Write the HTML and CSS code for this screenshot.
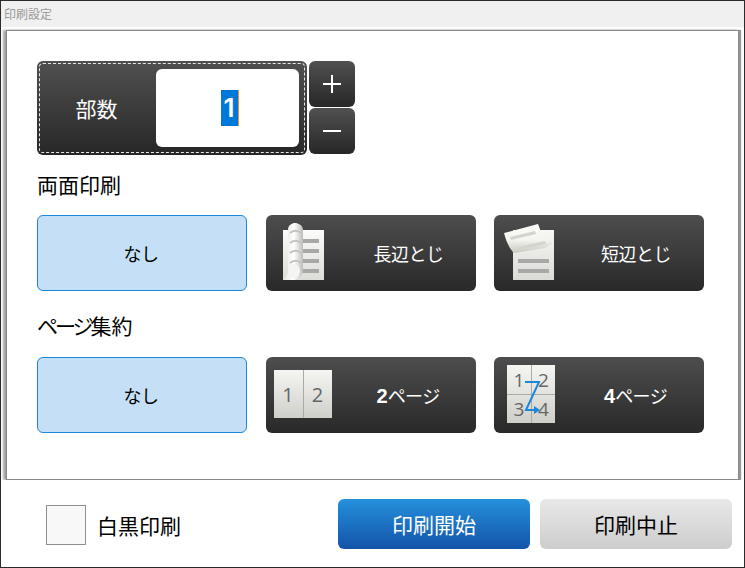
FILE: index.html
```html
<!DOCTYPE html>
<html lang="ja">
<head>
<meta charset="utf-8">
<title>印刷設定</title>
<link rel="stylesheet" href="styles.css">
</head>
<body>
<div class="window">
  <div class="titlebar">印刷設定</div>
  <main class="panel">
    <div class="copies-row">
      <div class="copies">
        <span class="copies-label">部数</span>
        <div class="copies-field"><span class="sel">1</span></div>
      </div>
      <div class="steppers">
        <button class="stepper">
          <svg width="18" height="18" viewBox="0 0 18 18"><path d="M9 0v18M0 9h18" stroke="#fff" stroke-width="2"/></svg>
        </button>
        <button class="stepper">
          <svg width="18" height="18" viewBox="0 0 18 18"><path d="M0 9h18" stroke="#fff" stroke-width="2"/></svg>
        </button>
      </div>
    </div>

    <h2 class="section">両面印刷</h2>
    <div class="options">
      <button class="opt selected">なし</button>
      <button class="opt dark">
        <span class="ico ico-long">
          <svg width="46" height="62" viewBox="0 0 46 62">
            <defs>
              <linearGradient id="pg" x1="0" y1="0" x2="0" y2="1"><stop offset="0" stop-color="#fbfbf9"/><stop offset="1" stop-color="#dcdcd8"/></linearGradient>
              <linearGradient id="rl" x1="0" y1="0" x2="1" y2="0"><stop offset="0" stop-color="#e4e4e0"/><stop offset=".55" stop-color="#fff"/><stop offset="1" stop-color="#bdbdb8"/></linearGradient>
            </defs>
            <rect x="2" y="9" width="41" height="50" fill="url(#pg)"/>
            <g fill="#a8a8a6"><rect x="21" y="18" width="17" height="4"/><rect x="21" y="28" width="17" height="4"/><rect x="21" y="38" width="17" height="4"/><rect x="21" y="48" width="17" height="4"/></g>
            <path d="M7 9c0-5 4-7 7-7s8 2 8 7v40c0 6-5 10-10 10H2c3-2 5-6 5-10z" fill="url(#rl)"/>
            <g stroke="#c4c4bf" stroke-width="2" fill="none"><path d="M9 12c3-3 8-3 11 0M9 22c3-3 8-3 11 0M9 32c3-3 8-3 11 0M9 42c3-3 8-3 11 0"/></g>
            <ellipse cx="13" cy="50" rx="6" ry="7" fill="#f4f4f2"/>
          </svg>
        </span>
        <span class="opt-text">長辺とじ</span>
      </button>
      <button class="opt dark">
        <span class="ico ico-short">
          <svg width="56" height="62" viewBox="0 0 56 62">
            <defs>
              <linearGradient id="pg2" x1="0" y1="0" x2="0" y2="1"><stop offset="0" stop-color="#f7f7f4"/><stop offset="1" stop-color="#dadad6"/></linearGradient>
              <linearGradient id="fl" x1="0" y1="0" x2="0" y2="1"><stop offset="0" stop-color="#fbfbf8"/><stop offset=".55" stop-color="#f4f4f0"/><stop offset="1" stop-color="#c9c9c0"/></linearGradient>
            </defs>
            <rect x="12" y="9" width="41" height="50" fill="url(#pg2)"/>
            <g fill="#a8a8a6"><rect x="17" y="38" width="31" height="4"/><rect x="17" y="48" width="31" height="4"/></g>
            <path d="M3 12L37 3l5 13 10 6-8 5-31 5C8 27 5 20 3 12z" fill="url(#fl)"/>
            <g fill="#d4d4cf"><path d="M9 16l25-6 1 3-25 6zM17 26l27-6 1 3-27 6z"/></g>
          </svg>
        </span>
        <span class="opt-text">短辺とじ</span>
      </button>
    </div>

    <h2 class="section"><span class="tight">ページ</span>集約</h2>
    <div class="options">
      <button class="opt selected">なし</button>
      <button class="opt dark">
        <span class="ico ico-two">
          <span class="sheet two"><span class="cell">1</span><span class="cell">2</span></span>
        </span>
        <span class="opt-text"><b class="num">2</b>ページ</span>
      </button>
      <button class="opt dark">
        <span class="ico ico-four">
          <span class="sheet four">
            <span class="cell">1</span><span class="cell">2</span><span class="cell">3</span><span class="cell">4</span>
            <svg class="z-arrow" width="48" height="58" viewBox="0 0 48 58"><path d="M18 17h14L19 45h10" fill="none" stroke="#1b87d8" stroke-width="2"/><path d="M27 41l6 4-6 4z" fill="#1b87d8"/></svg>
          </span>
        </span>
        <span class="opt-text"><b class="num">4</b>ページ</span>
      </button>
    </div>
  </main>
  <footer class="footer">
    <label class="mono">
      <span class="check"></span>
      <span>白黒印刷</span>
    </label>
    <button class="action start">印刷開始</button>
    <button class="action stop">印刷中止</button>
  </footer>
</div>
</body>
</html>
```

FILE: styles.css
```css
* { box-sizing: border-box; }
html, body { margin: 0; padding: 0; }
body {
  width: 745px;
  height: 568px;
  overflow: hidden;
  font-family: "Noto Sans CJK JP", "Noto Sans", sans-serif;
  background: #fff;
}
button { font-family: inherit; border: 0; padding: 0; margin: 0; }
.window {
  width: 745px;
  height: 568px;
  border: 1px solid #2b2b2b;
  display: flex;
  flex-direction: column;
  background: #fff;
}
.titlebar {
  height: 26px;
  flex: none;
  background: #f0f0f0;
  color: #9a9a9a;
  font-size: 12px;
  line-height: 25px;
  padding-left: 3px;
}
.panel {
  flex: none;
  width: 733px;
  height: 450px;
  margin: 3px 0 0 5px;
  background: #fff;
  border: 1px solid #8a8a8a;
  box-shadow: 0 2px 2px #8f8f8f, -3px 0 2px #aaa, 2px 0 1px #999;
  padding: 30px 30px 0 30px;
}
.copies-row { display: flex; gap: 2px; height: 94px; }
.copies {
  width: 270px;
  height: 94px;
  border-radius: 6px;
  background: linear-gradient(#505050, #272727);
  outline: 1px dashed #e6e6e6;
  outline-offset: -3px;
  display: flex;
  align-items: center;
  padding: 8px 7px 8px 0;
}
.copies-label { width: 119px; text-align: center; color: #fff; font-size: 21px; }
.copies-field {
  width: 143px;
  height: 78px;
  background: #fff;
  border-radius: 6px;
  display: flex;
  align-items: center;
  justify-content: center;
  font-family: "Inter", "Noto Sans", sans-serif;
  font-size: 26px;
}
.sel {
  display: block;
  background: #0078d7;
  color: #fff;
  width: 18px;
  height: 36px;
  line-height: 36px;
  text-align: center;
  border-right: 1px solid #f28c28;
  margin-right: -4px;
  font-weight: 600;
}
.steppers { display: flex; flex-direction: column; gap: 1px; }
.stepper {
  width: 46px;
  height: 46px;
  border-radius: 6px;
  background: linear-gradient(#505050, #272727);
  display: flex;
  align-items: center;
  justify-content: center;
}
.section {
  margin: 0;
  font-weight: 400;
  font-size: 21px;
  line-height: 26px;
  color: #000;
  height: 26px;
  margin-top: 16px;
}
.tight { letter-spacing: -3px; }
.options { display: flex; gap: 18.5px; height: 76px; }
.section + .options { margin-top: 18px; }
.options + .section { margin-top: 21px; }
.options + .section + .options { margin-top: 19px; }
.opt {
  width: 210px;
  height: 76px;
  border-radius: 6px;
  font-size: 18px;
  letter-spacing: -0.5px;
  display: flex;
  align-items: center;
  justify-content: center;
  position: relative;
}
.opt.selected { background: #c5e0f6; border: 1px solid #1b87d8; color: #000; padding-right: 2px; }
.opt.dark {
  background: linear-gradient(#4d4d4d, #292929);
  color: #fff;
  justify-content: flex-start;
}
.ico { height: 76px; flex: none; display: flex; align-items: flex-start; justify-content: flex-start; }
.ico-long { width: 108px; padding: 6px 0 0 15px; }
.ico-short { width: 107px; padding: 6px 0 0 7px; }
.ico-two { width: 111px; padding: 13px 0 0 8px; }
.ico-four { width: 110px; padding: 8px 0 0 13px; }
.opt-text { font-size: 18px; white-space: nowrap; }
.num { font-family: "Liberation Sans", sans-serif; font-weight: 700; font-size: 20px; letter-spacing: 0; }
.sheet {
  display: grid;
  background: linear-gradient(#f5f5f2, #cfcfca);
  color: #666;
  font-family: "Open Sans", "Noto Sans", sans-serif;
  letter-spacing: 0;
  position: relative;
}
.sheet.two { width: 58px; height: 48px; grid-template-columns: 1fr 1fr; font-size: 20px; }
.sheet.four { width: 48px; height: 58px; grid-template-columns: 1fr 1fr; grid-template-rows: 1fr 1fr; font-size: 19px; }
.cell { display: flex; align-items: center; justify-content: center; border-left: 1px solid #aaa; }
.cell:nth-child(odd) { border-left: 0; }
.four .cell:nth-child(n+3) { border-top: 1px solid #aaa; }
.z-arrow { position: absolute; left: 0; top: 0; }
.footer {
  flex: 1;
  display: flex;
  align-items: center;
  padding: 1px 12px 0 45px;
  background: #fff;
}
.mono { display: flex; align-items: center; gap: 11px; font-size: 21px; color: #000; margin-right: auto; margin-top: 2px; }
.check { width: 40px; height: 40px; border: 1px solid #8f8f8f; background: #f8f8f8; display: block; }
.action { width: 192px; height: 50px; border-radius: 6px; font-size: 21px; }
.start { background: linear-gradient(#2590dc, #1354a8); color: #fff; margin-right: 10px; }
.stop { background: linear-gradient(#e8e8e8, #cdcdcd); color: #000; }
```
